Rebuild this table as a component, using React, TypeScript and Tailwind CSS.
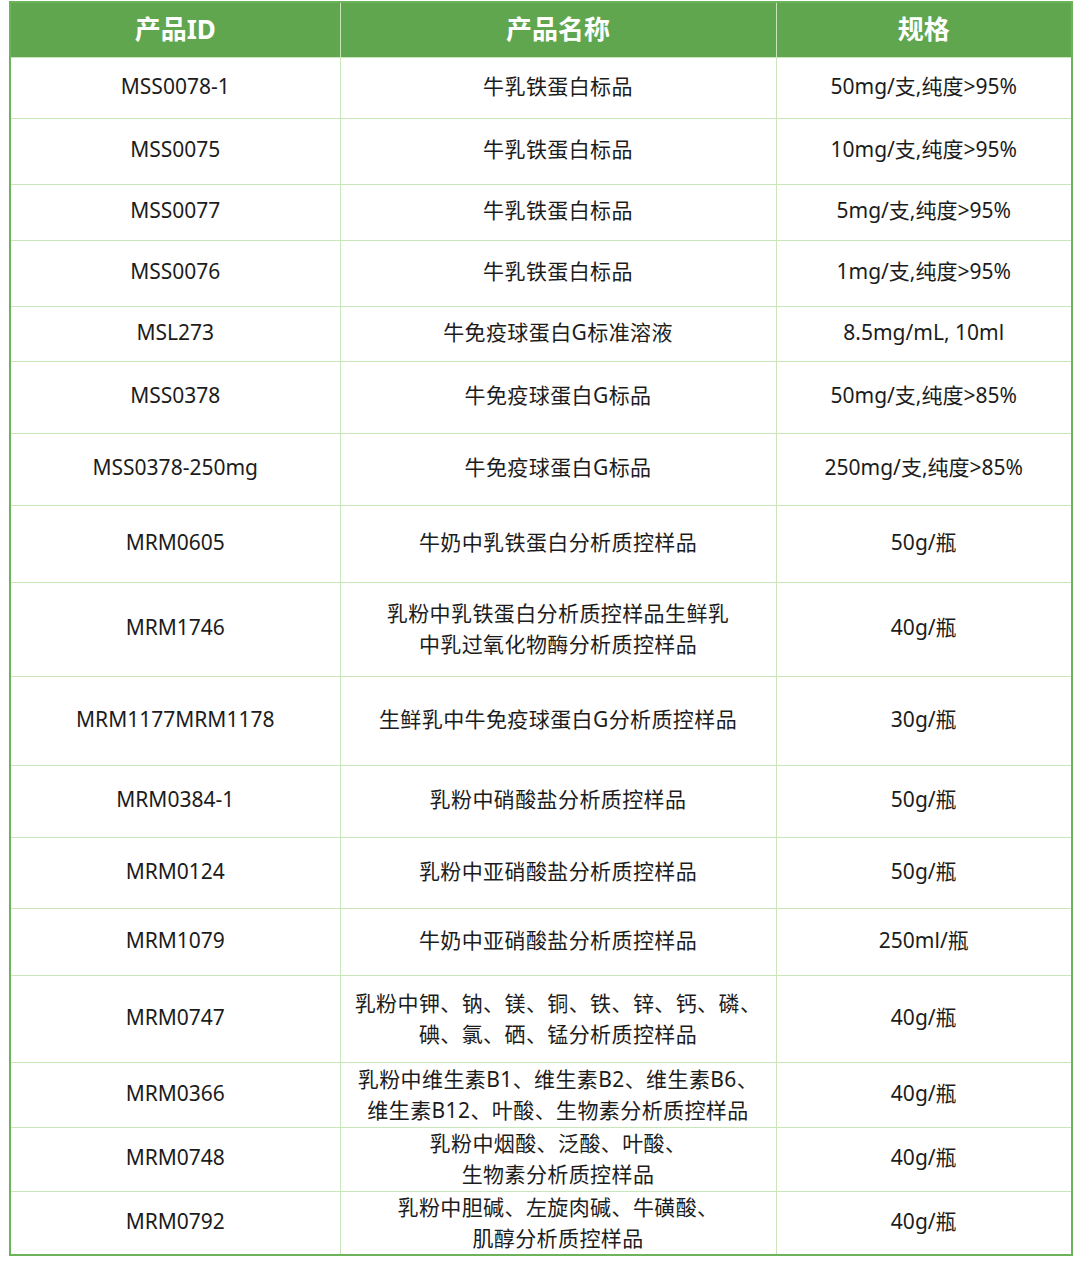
import React from "react";

type Row = { id: string; name: React.ReactNode; spec: string; h: string; multi?: boolean };

const rows: Row[] = [
  { id: "MSS0078-1", name: "牛乳铁蛋白标品", spec: "50mg/支,纯度>95%", h: "h-[61px]" },
  { id: "MSS0075", name: "牛乳铁蛋白标品", spec: "10mg/支,纯度>95%", h: "h-[66px]" },
  { id: "MSS0077", name: "牛乳铁蛋白标品", spec: "5mg/支,纯度>95%", h: "h-[56px]" },
  { id: "MSS0076", name: "牛乳铁蛋白标品", spec: "1mg/支,纯度>95%", h: "h-[66px]" },
  { id: "MSL273", name: "牛免疫球蛋白G标准溶液", spec: "8.5mg/mL, 10ml", h: "h-[55px]" },
  { id: "MSS0378", name: "牛免疫球蛋白G标品", spec: "50mg/支,纯度>85%", h: "h-[72px]" },
  { id: "MSS0378-250mg", name: "牛免疫球蛋白G标品", spec: "250mg/支,纯度>85%", h: "h-[72px]" },
  { id: "MRM0605", name: "牛奶中乳铁蛋白分析质控样品", spec: "50g/瓶", h: "h-[77px]" },
  {
    id: "MRM1746",
    name: (
      <>
        乳粉中乳铁蛋白分析质控样品生鲜乳
        <br />
        中乳过氧化物酶分析质控样品
      </>
    ),
    spec: "40g/瓶",
    h: "h-[94px]",
    multi: true,
  },
  { id: "MRM1177MRM1178", name: "生鲜乳中牛免疫球蛋白G分析质控样品", spec: "30g/瓶", h: "h-[89px]" },
  { id: "MRM0384-1", name: "乳粉中硝酸盐分析质控样品", spec: "50g/瓶", h: "h-[72px]" },
  { id: "MRM0124", name: "乳粉中亚硝酸盐分析质控样品", spec: "50g/瓶", h: "h-[71px]" },
  { id: "MRM1079", name: "牛奶中亚硝酸盐分析质控样品", spec: "250ml/瓶", h: "h-[67px]" },
  {
    id: "MRM0747",
    name: (
      <>
        乳粉中钾、钠、镁、铜、铁、锌、钙、磷、
        <br />
        碘、氯、硒、锰分析质控样品
      </>
    ),
    spec: "40g/瓶",
    h: "h-[87px]",
    multi: true,
  },
  {
    id: "MRM0366",
    name: (
      <>
        乳粉中维生素B1、维生素B2、维生素B6、
        <br />
        维生素B12、叶酸、生物素分析质控样品
      </>
    ),
    spec: "40g/瓶",
    h: "h-[65px]",
    multi: true,
  },
  {
    id: "MRM0748",
    name: (
      <>
        乳粉中烟酸、泛酸、叶酸、
        <br />
        生物素分析质控样品
      </>
    ),
    spec: "40g/瓶",
    h: "h-[64px]",
    multi: true,
  },
  {
    id: "MRM0792",
    name: (
      <>
        乳粉中胆碱、左旋肉碱、牛磺酸、
        <br />
        肌醇分析质控样品
      </>
    ),
    spec: "40g/瓶",
    h: "h-[64px]",
    multi: true,
  },
];

const App = () => {
  return (
    <div
      className="w-[1080px] h-[1266px] bg-white pt-[1px] pl-[9px]"
      style={{ fontFamily: '"Noto Sans", "Noto Sans CJK SC", sans-serif' }}
    >
      <table className="w-[1062px] border-collapse border-2 border-[#6db35a] text-[#1c1c1c] table-fixed">
        <colgroup>
          <col className="w-[330px]" />
          <col className="w-[436px]" />
          <col className="w-[296px]" />
        </colgroup>
        <thead>
          <tr className="h-[55px] bg-[#5fa64f] text-white text-[26px] font-bold">
            <th className="border-r border-[#c8e6b9] text-center">产品ID</th>
            <th className="border-r border-[#c8e6b9] text-center">产品名称</th>
            <th className="text-center">规格</th>
          </tr>
        </thead>
        <tbody className="text-[21px] leading-[31px]">
          {rows.map((r) => (
            <tr key={r.id} className={`${r.h} border-t border-[#c8e6b9]`}>
              <td className="border-r border-[#c8e6b9] text-center pb-[3px]">{r.id}</td>
              <td
                className={`border-r border-[#c8e6b9] text-center tracking-[0.4px] whitespace-nowrap ${
                  r.multi ? "pb-0" : "pb-[3px]"
                }`}
              >
                {r.name}
              </td>
              <td className="text-center pb-[3px]">{r.spec}</td>
            </tr>
          ))}
        </tbody>
      </table>
    </div>
  );
};

export default App;
